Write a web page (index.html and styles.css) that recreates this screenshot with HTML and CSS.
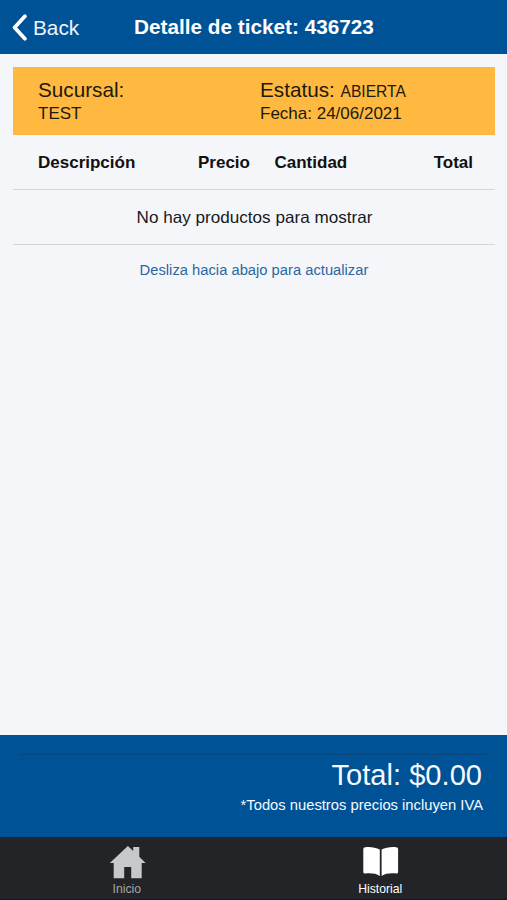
FILE: index.html
```html
<!DOCTYPE html>
<html lang="es">
<head>
<meta charset="utf-8">
<title>Detalle de ticket</title>
<link rel="stylesheet" href="styles.css">
</head>
<body>
<header class="bar">
  <a class="back"><svg class="chevron" width="15" height="27" viewBox="0 0 15 27"><path d="M12.9 2.3 2.6 13.5 12.9 24.7" fill="none" stroke="currentColor" stroke-width="3.8" stroke-linecap="round" stroke-linejoin="round"/></svg><span>Back</span></a>
  <h1 class="title">Detalle de ticket: 436723</h1>
</header>
<main class="content">
  <section class="summary">
    <div><div class="lead">Sucursal:</div><div class="detail">TEST</div></div>
    <div><div class="lead">Estatus: <span class="status">ABIERTA</span></div><div class="detail">Fecha: 24/06/2021</div></div>
  </section>
  <div class="columns">
    <span>Descripción</span><span class="price">Precio</span><span>Cantidad</span><span class="amount">Total</span>
  </div>
  <p class="empty">No hay productos para mostrar</p>
  <p class="hint"><span>Desliza hacia abajo para actualizar</span></p>
</main>
<footer class="totals">
  <hr class="rule">
  <div class="total"><span>Total: $0.00</span></div>
  <div class="note"><span>*Todos nuestros precios incluyen IVA</span></div>
</footer>
<nav class="tabs">
  <a class="tab"><svg class="icon" width="38" height="34" viewBox="0 0 38 34"><path fill="currentColor" d="M19.9 1 25.2 5.9V2H31.3V11.7L37.6 18.1H33.7V33.3H23.2V22H16.2V33.3H5.7V18.1H1.8Z"/></svg><span>Inicio</span></a>
  <a class="tab active"><svg class="icon" width="38" height="34" viewBox="0 0 38 34"><path fill="currentColor" d="M18.8 4.6C15 2.3 8.5 1.6 4.3 2.2Q2.3 2.4 2.3 4V27Q2.3 28.7 4.1 28.6C9.7 27.9 14.9 28.4 18.8 30.9ZM20.6 4.6C24.4 2.3 30.9 1.6 35.1 2.2Q37.1 2.4 37.1 4V27Q37.1 28.7 35.3 28.6C29.7 27.9 24.5 28.4 20.6 30.9Z"/></svg><span>Historial</span></a>
</nav>
</body>
</html>
```
FILE: styles.css
```css
* { box-sizing: border-box; }
body {
  margin: 0;
  height: 900px;
  display: flex;
  flex-direction: column;
  overflow: hidden;
  background: #f4f6fa;
  color: #16191d;
  font-family: "Liberation Sans", Arial, sans-serif;
}
p, h1 { margin: 0; }
.bar {
  height: 54px;
  flex: none;
  display: grid;
  grid-template-columns: 134px 1fr;
  align-items: center;
  background: #005296;
  color: #fff;
}
.back { display: flex; align-items: center; gap: 6px; padding: 1px 0 0 12px; font-size: 20.8px; line-height: 26px; color: #edf5fc; }
.back span { padding-top: 1px; }
.chevron { color: #fff; }
.title { font-size: 20.75px; line-height: 24px; white-space: nowrap; }
.content { flex: 1; padding: 13px 12px 0 13px; }
.summary {
  height: 68px;
  padding: 11px 25px 0;
  display: grid;
  grid-template-columns: 222px 1fr;
  background: #ffb940;
  color: #21190d;
}
.lead { height: 25px; font-size: 20.7px; line-height: 24px; white-space: nowrap; }
.status { font-size: 15.6px; line-height: 1; }
.detail { font-size: 17px; line-height: 21px; }
.columns {
  height: 55px;
  padding: 1px 22px 0 25px;
  display: grid;
  grid-template-columns: 160px 76.5px 90px 1fr;
  align-items: center;
  border-bottom: 1px solid #d4d6d9;
  font-size: 17px;
  font-weight: bold;
  color: #111;
}
.amount { text-align: right; }
.empty {
  height: 55px;
  padding-left: 1px;
  line-height: 56px;
  border-bottom: 1px solid #d4d6d9;
  font-size: 17.12px;
  text-align: center;
}
.hint { line-height: 50px; font-size: 14.75px; text-align: center; color: #2d669f; }
.totals {
  height: 102px;
  flex: none;
  padding: 19px 20px 0;
  background: #005296;
  color: #f4faff;
  text-align: right;
}
.rule { height: 1px; margin: 0; border: 0; background: #08457b; }
.total { padding: 3px 5px 0 0; font-size: 29.1px; line-height: 34px; }
.note { padding: 2px 4px 0 0; font-size: 14.75px; line-height: 23px; }
.tabs {
  height: 63px;
  flex: none;
  display: grid;
  grid-template-columns: 1fr 1fr;
  background: #222428;
  border-bottom: 1px solid #16181b;
}
.tab { display: flex; flex-direction: column; align-items: center; padding-top: 8px; font-size: 12.2px; line-height: 21px; color: #a5a7aa; }
.tab .icon { flex: none; color: #c7c8ca; }
.tab.active, .tab.active .icon { color: #fff; }
```
